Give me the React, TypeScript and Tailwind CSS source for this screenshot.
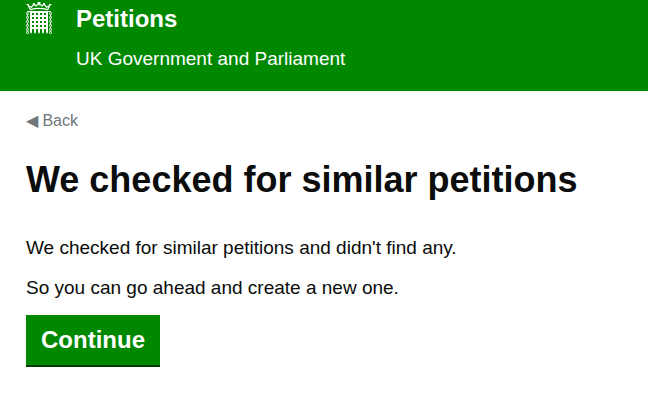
const barColumns = [5, 9, 13, 17, 21];
const barRows = [10, 14, 18, 22, 26];
const chainLinks = [11.5, 15.5, 19.5, 23.5, 27.5, 30.5];

function Portcullis() {
  return (
    <svg viewBox="0 0 26 32" className="h-8 w-[26px] shrink-0" fill="none" stroke="currentColor" aria-hidden="true">
      <g strokeWidth="1.2">
        <path d="M4.5 8 2 3M21.5 8 24 3M4.5 7.6Q13 5.2 21.5 7.6" />
        <path d="M2.5 3.8 5.5 5.2 7.8 2.2 10 4 13 1.2 16 4 18.2 2.2 20.5 5.2 23.5 3.8" />
        <path d="M.5 2.5H3M23 2.5H25.5M7 1.5H9M17 1.5H19M11.5.7H14.5M13 0V3.5" />
      </g>
      <g strokeWidth="2">
        {barRows.map((y) => (
          <path key={y} d={`M4 ${y}H22`} />
        ))}
        {barColumns.map((x) => (
          <path key={x} d={`M${x} 9V30`} />
        ))}
      </g>
      <path
        d="M4 30 5 32 6 30ZM8 30 9 32 10 30ZM12 30 13 32 14 30ZM16 30 17 32 18 30ZM20 30 21 32 22 30Z"
        fill="currentColor"
        stroke="none"
      />
      <g strokeWidth="1">
        {chainLinks.map((y) => (
          <g key={y}>
            <rect x=".5" y={y - 1} width="2" height="2" rx=".7" />
            <rect x="23.5" y={y - 1} width="2" height="2" rx=".7" />
          </g>
        ))}
        <path d="M1.5 12.5V14.5M1.5 16.5V18.5M1.5 20.5V22.5M1.5 24.5V26.5M24.5 12.5V14.5M24.5 16.5V18.5M24.5 20.5V22.5M24.5 24.5V26.5M1.5 10V9.5H4M22 9.5H24.5V10" />
      </g>
    </svg>
  );
}

export default function App() {
  return (
    <div className="font-['Liberation_Sans',Arial,sans-serif] text-[#0b0c0c]">
      <header className="flex gap-6 bg-[#008800] px-[26px] pb-5 text-white">
        <div className="pt-0.5">
          <Portcullis />
        </div>
        <div className="pt-1">
          <a href="#" className="block text-2xl leading-[30px] font-bold">Petitions</a>
          <p className="mt-3 text-[19px] leading-[25px]">UK Government and Parliament</p>
        </div>
      </header>
      <main className="px-[26px] pt-5">
        <a href="#" className="block text-base leading-5 text-[#6f777b]">◀ Back</a>
        <h1 className="mt-6 text-4xl leading-[50px] font-bold">We checked for similar petitions</h1>
        <p className="mt-[30px] text-[19px] leading-[25px]">We checked for similar petitions and didn't find any.</p>
        <p className="mt-[15px] text-[19px] leading-[25px]">So you can go ahead and create a new one.</p>
        <button type="button" className="mt-[15px] border-b-2 border-[#003c00] bg-[#008800] px-[15px] py-[10px] text-2xl leading-[30px] font-bold text-white">Continue</button>
      </main>
    </div>
  );
}
